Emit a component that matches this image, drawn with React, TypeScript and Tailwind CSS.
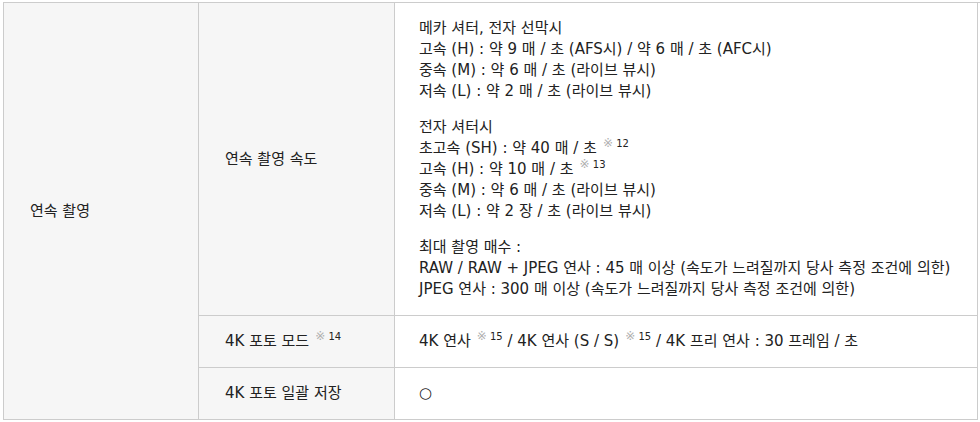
import React from "react";

const Note = ({ n }: { n: string }) => (
  <span className="relative -top-[6px] ml-[6px] text-[10px] leading-none">
    <span className="text-[12px] text-[#b0b0b0]">※</span> <span>{n}</span>
  </span>
);

export default function App() {
  const font = { fontFamily: '"DejaVu Sans", "Noto Sans CJK KR", sans-serif' };
  return (
    <div className="bg-white w-[980px] h-[422px] overflow-hidden pt-[2px] pl-[3px]" style={font}>
      <div className="grid grid-cols-[195px_196px_583px] border-l border-t border-[#cccccc] text-[15px] leading-[21px] text-[#222]">
        <div className="row-span-3 flex items-center border-r border-b border-[#cccccc] bg-[#f6f6f6] px-[26px]">
          연속 촬영
        </div>
        <div className="flex items-center border-r border-b border-[#cccccc] bg-[#f6f6f6] px-[26px]">
          연속 촬영 속도
        </div>
        <div className="border-r border-b border-[#cccccc] py-[15px] px-[24px]">
          <div className="mb-[15px]">
            <div className="h-[21px]">메카 셔터, 전자 선막시</div>
            <div className="h-[21px]">고속 (H) : 약 9 매 / 초 (AFS시) / 약 6 매 / 초 (AFC시)</div>
            <div className="h-[21px]">중속 (M) : 약 6 매 / 초 (라이브 뷰시)</div>
            <div className="h-[21px]">저속 (L) : 약 2 매 / 초 (라이브 뷰시)</div>
          </div>
          <div className="mb-[15px]">
            <div className="h-[21px]">전자 셔터시</div>
            <div className="h-[21px]">초고속 (SH) : 약 40 매 / 초<Note n="12" /></div>
            <div className="h-[21px]">고속 (H) : 약 10 매 / 초<Note n="13" /></div>
            <div className="h-[21px]">중속 (M) : 약 6 매 / 초 (라이브 뷰시)</div>
            <div className="h-[21px]">저속 (L) : 약 2 장 / 초 (라이브 뷰시)</div>
          </div>
          <div>
            <div className="h-[21px]">최대 촬영 매수 :</div>
            <div className="h-[21px]">RAW / RAW + JPEG 연사 : 45 매 이상 (속도가 느려질까지 당사 측정 조건에 의한)</div>
            <div className="h-[21px]">JPEG 연사 : 300 매 이상 (속도가 느려질까지 당사 측정 조건에 의한)</div>
          </div>
        </div>
        <div className="border-r border-b border-[#cccccc] bg-[#f6f6f6] py-[15px] px-[26px]">
          <div className="h-[21px]">4K 포토 모드<Note n="14" /></div>
        </div>
        <div className="border-r border-b border-[#cccccc] py-[15px] px-[24px]">
          <div className="h-[21px]">4K 연사<Note n="15" /> / 4K 연사 (S / S)<Note n="15" /> / 4K 프리 연사 : 30 프레임 / 초</div>
        </div>
        <div className="border-r border-b border-[#cccccc] bg-[#f6f6f6] py-[15px] px-[26px]">
          <div className="h-[21px]">4K 포토 일괄 저장</div>
        </div>
        <div className="border-r border-b border-[#cccccc] py-[15px] px-[24px]">
          <div className="h-[21px]">○</div>
        </div>
      </div>
    </div>
  );
}
